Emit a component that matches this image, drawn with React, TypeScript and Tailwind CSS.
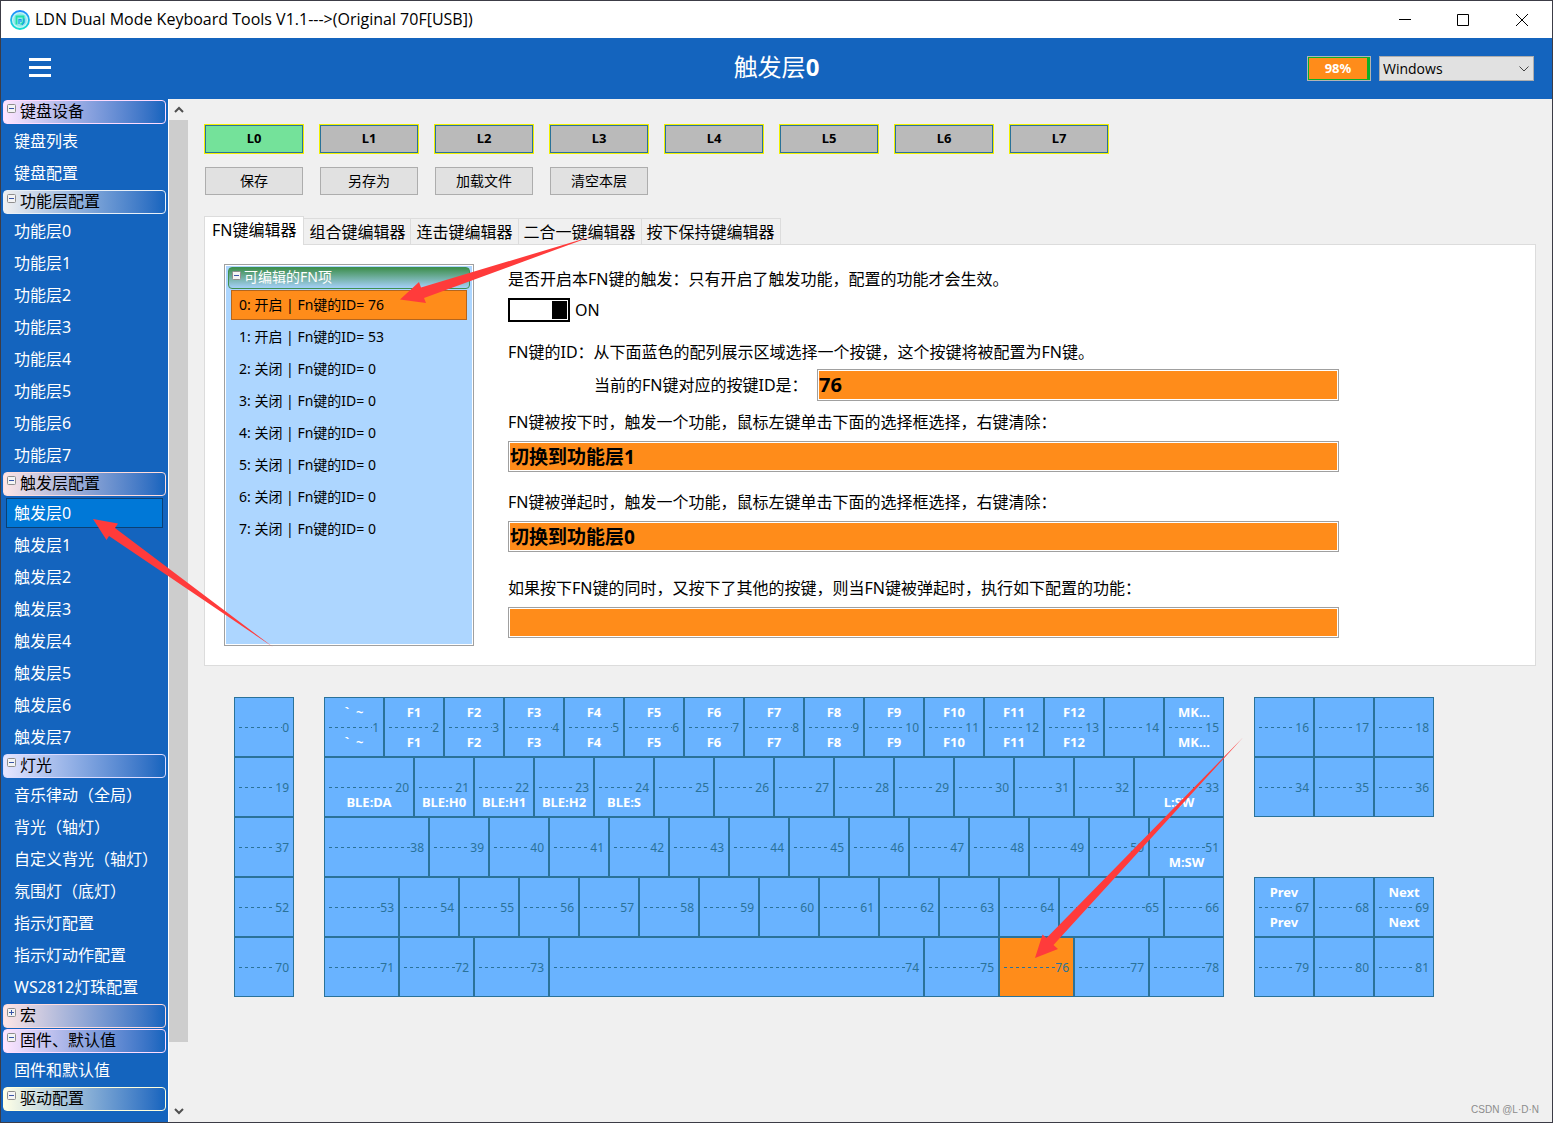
import { useState } from "react";
import clsx from "clsx";

interface NavGroup {
  title: string;
  tint: string;
  items: string[];
}

const layers = [0, 1, 2, 3, 4, 5, 6, 7];

const navGroups: NavGroup[] = [
  { title: "键盘设备", tint: "border-[#ffdcff] from-[#ffe6ff]", items: ["键盘列表", "键盘配置"] },
  { title: "功能层配置", tint: "border-[#e8f0f8] from-[#f0f0f0]", items: layers.map((n) => `功能层${n}`) },
  { title: "触发层配置", tint: "border-[#ffdcdc] from-[#ffe6e6]", items: layers.map((n) => `触发层${n}`) },
  {
    title: "灯光",
    tint: "border-[#dcdcff] from-[#e6e6ff]",
    items: [
      "音乐律动（全局）",
      "背光（轴灯）",
      "自定义背光（轴灯）",
      "氛围灯（底灯）",
      "指示灯配置",
      "指示灯动作配置",
      "WS2812灯珠配置",
    ],
  },
  { title: "宏", tint: "border-[#ffdcdc] from-[#ffe6e6]", items: [] },
  { title: "固件、默认值", tint: "border-[#ffdcff] from-[#ffe6ff]", items: ["固件和默认值"] },
  { title: "驱动配置", tint: "border-[#ffffdc] from-[#ffffe6]", items: [] },
];

const tabs = ["FN键编辑器", "组合键编辑器", "连击键编辑器", "二合一键编辑器", "按下保持键编辑器"];

const fnItems = [
  "0: 开启 | Fn键的ID= 76",
  "1: 开启 | Fn键的ID= 53",
  "2: 关闭 | Fn键的ID= 0",
  "3: 关闭 | Fn键的ID= 0",
  "4: 关闭 | Fn键的ID= 0",
  "5: 关闭 | Fn键的ID= 0",
  "6: 关闭 | Fn键的ID= 0",
  "7: 关闭 | Fn键的ID= 0",
];

// [top label, bottom label]
const keyLabels: Record<number, [string, string]> = {
  1: ["`  ~", "`  ~"],
  15: ["MK...", "MK..."],
  20: ["", "BLE:DA"],
  21: ["", "BLE:H0"],
  22: ["", "BLE:H1"],
  23: ["", "BLE:H2"],
  24: ["", "BLE:S"],
  33: ["", "L:SW"],
  51: ["", "M:SW"],
  67: ["Prev", "Prev"],
  69: ["Next", "Next"],
};
for (let i = 1; i <= 12; i++) keyLabels[i + 1] = [`F${i}`, `F${i}`];

// keys that are not one unit wide
const keyWidths: Record<number, string> = {
  20: "w-[90px]",
  33: "w-[90px]",
  38: "w-[105px]",
  51: "w-[75px]",
  53: "w-[75px]",
  65: "w-[105px]",
  71: "w-[75px]",
  72: "w-[75px]",
  73: "w-[75px]",
  74: "w-[375px]",
  75: "w-[75px]",
  76: "w-[75px]",
  77: "w-[75px]",
  78: "w-[75px]",
};

const range = (from: number, to: number) =>
  Array.from({ length: to - from + 1 }, (_, i) => from + i);

const leftRows = [[0], [19], [37], [52], [70]];
const mainRows = [range(1, 15), range(20, 33), range(38, 51), range(53, 66), range(71, 78)];
const rightRows = [range(16, 18), range(34, 36), [], range(67, 69), range(79, 81)];

function TreeBox({ open }: { open: boolean }) {
  return (
    <svg width="9" height="9" viewBox="0 0 9 9" className="mt-[3px] shrink-0">
      <rect x="0.5" y="0.5" width="8" height="8" rx="1" fill="#f4f4f4" stroke="#8e8e8e" />
      <path d={open ? "M2 4.5h5" : "M2 4.5h5M4.5 2v5"} stroke="#3a56a8" />
    </svg>
  );
}

function Logo() {
  return (
    <svg width="20" height="20" viewBox="0 0 20 20">
      <defs>
        <linearGradient id="ring" x1="0" y1="0" x2="0" y2="1">
          <stop offset="0" stopColor="#1e8cff" />
          <stop offset="1" stopColor="#12e0d0" />
        </linearGradient>
      </defs>
      <circle cx="10" cy="10" r="9" fill="#c4f4f4" stroke="url(#ring)" strokeWidth="1.800" />
      <circle cx="10" cy="10" r="6.800" fill="#8ee8ea" />
      <path d="M6.500 14.500V6.500h7v4.500a3 3 0 0 1-3 3" fill="none" stroke="#1fe0a8" strokeWidth="1.800" />
      <path d="M9 14V9.500h2V12M14 8.500v4l-2 2.500" fill="none" stroke="#1597e8" strokeWidth="1.200" />
    </svg>
  );
}

function Sidebar() {
  const [active, setActive] = useState("触发层0");

  return (
    <nav className="flex w-[167px] shrink-0 flex-col gap-px overflow-hidden bg-[#1464be] pt-px">
      {navGroups.map((group) => (
        <div key={group.title} className="flex shrink-0 flex-col gap-px">
          <button
            className={clsx(
              "mx-[2px] flex h-6 items-start gap-1 rounded border bg-linear-to-r to-[#1464be] pl-[3px] text-left leading-5 text-black",
              group.tint
            )}
          >
            <TreeBox open={group.title !== "宏"} />
            {group.title}
          </button>
          {group.items.length > 0 && (
            <ul>
              {group.items.map((item) => (
                <li key={item} className="px-[5px] py-px">
                  <a
                    href="#"
                    onClick={() => setActive(item)}
                    className={clsx(
                      "block h-[30px] border pl-[7px] leading-7 whitespace-nowrap text-white",
                      item === active ? "border-[#0a4074] bg-[#0078d7]" : "border-transparent"
                    )}
                  >
                    {item}
                  </a>
                </li>
              ))}
            </ul>
          )}
        </div>
      ))}
    </nav>
  );
}

function Scrollbar() {
  return (
    <div className="flex w-5 shrink-0 flex-col border-l border-white bg-[#f0f0f0]">
      <div className="flex h-[21px] items-center justify-center">
        <svg width="10" height="7" viewBox="0 0 10 7">
          <path d="M1 6l4-4 4 4" fill="none" stroke="#505050" strokeWidth="2" />
        </svg>
      </div>
      <div className="flex flex-1 flex-col">
        <div className="flex-[922] bg-[#cdcdcd]" />
        <div className="flex-[59]" />
      </div>
      <div className="flex h-[21px] items-center justify-center">
        <svg width="10" height="7" viewBox="0 0 10 7">
          <path d="M1 1l4 4 4-4" fill="none" stroke="#505050" strokeWidth="2" />
        </svg>
      </div>
    </div>
  );
}

function KeyCap({ id, selected, onSelect }: { id: number; selected: boolean; onSelect: () => void }) {
  const [top, bottom] = keyLabels[id] ?? ["", ""];

  return (
    <button
      onClick={onSelect}
      className={clsx(
        "flex h-15 shrink-0 flex-col border border-[#2a7299] px-1 pt-[7px] text-center text-[13px] leading-[15px] font-bold whitespace-pre text-white",
        keyWidths[id] ?? "w-15",
        selected ? "bg-[#ff8c1a]" : "bg-[#69b3ff]"
      )}
    >
      <span className="block h-[15px] w-full">{top}</span>
      <span className="flex h-[15px] w-full items-center text-xs leading-[15px] font-normal text-[#2a7299]">
        <span className="h-px flex-1 bg-[repeating-linear-gradient(90deg,#2a7299_0_3px,transparent_3px_6px)]" />
        {id}
      </span>
      <span className="block h-[15px] w-full">{bottom}</span>
    </button>
  );
}

function KeyBlock({ rows, selected, onSelect }: { rows: number[][]; selected: number; onSelect: (id: number) => void }) {
  return (
    <div className="shrink-0">
      {rows.map((row, i) => (
        <div key={i} className="flex h-15">
          {row.map((id) => (
            <KeyCap key={id} id={id} selected={id === selected} onSelect={() => onSelect(id)} />
          ))}
        </div>
      ))}
    </div>
  );
}

const fieldClass =
  "w-full border border-[#a0a0a0] bg-[#ff8c1a] px-px pb-[2px] font-bold text-black shadow-[inset_0_0_0_1px_#fff] outline-none";

function FnEditor({ keyId }: { keyId: number }) {
  const [current, setCurrent] = useState(0);
  const [on, setOn] = useState(true);

  return (
    <section className="flex gap-[34px] border border-[#dcdcdc] bg-white p-[19px]">
      <div className="w-[250px] shrink-0 border border-[#a0a0a0] bg-[#add6ff] px-[3px] pt-[2px] text-sm shadow-[inset_0_0_0_1px_#fff]">
        <button className="flex h-[22px] w-full items-start gap-[3px] rounded border border-[#3f8f4f] bg-linear-to-b from-[#3f8f4f] to-[#a5d0f8] pl-[3px] text-left leading-[18px] text-white">
          <TreeBox open />
          可编辑的FN项
        </button>
        <ul className="px-[3px]">
          {fnItems.map((item, i) => (
            <li key={item} className="py-px">
              <button
                onClick={() => setCurrent(i)}
                className={clsx(
                  "h-[30px] w-full border pl-[7px] text-left text-black",
                  i === current ? "border-[#b5651d] bg-[#ff8c1a]" : "border-transparent"
                )}
              >
                {item}
              </button>
            </li>
          ))}
        </ul>
      </div>

      <div className="max-w-[831px] flex-1 pt-[3px] leading-6">
        <p>是否开启本FN键的触发：只有开启了触发功能，配置的功能才会生效。</p>
        <label className="relative mt-[7px] flex h-6 w-fit items-center gap-[5px]">
          <input
            type="checkbox"
            checked={on}
            onChange={() => setOn(!on)}
            className="peer sr-only"
          />
          <span className="flex h-6 w-[62px] justify-start border-2 border-black bg-white p-px peer-checked:justify-end">
            <span className="w-[15px] bg-black" />
          </span>
          {on ? "ON" : "OFF"}
        </label>
        <p className="mt-[18px]">FN键的ID：从下面蓝色的配列展示区域选择一个按键，这个按键将被配置为FN键。</p>
        <div className="mt-[5px] flex items-center">
          <label htmlFor="key-id" className="w-[309px] shrink-0 pl-[86px] whitespace-nowrap">
            当前的FN键对应的按键ID是：
          </label>
          <input id="key-id" readOnly value={keyId} className={clsx(fieldClass, "h-8 text-xl")} />
        </div>
        <label htmlFor="on-press" className="mt-[9px] block">
          FN键被按下时，触发一个功能，鼠标左键单击下面的选择框选择，右键清除：
        </label>
        <input
          id="on-press"
          readOnly
          value="切换到功能层1"
          className={clsx(fieldClass, "mt-[7px] block h-[31px] text-[19px]")}
        />
        <label htmlFor="on-release" className="mt-[18px] block">
          FN键被弹起时，触发一个功能，鼠标左键单击下面的选择框选择，右键清除：
        </label>
        <input
          id="on-release"
          readOnly
          value="切换到功能层0"
          className={clsx(fieldClass, "mt-[7px] block h-[31px] text-[19px]")}
        />
        <label htmlFor="on-combo" className="mt-6 block">
          如果按下FN键的同时，又按下了其他的按键，则当FN键被弹起时，执行如下配置的功能：
        </label>
        <input
          id="on-combo"
          readOnly
          value=""
          className={clsx(fieldClass, "mt-[7px] mb-2 block h-[31px] text-[19px]")}
        />
      </div>
    </section>
  );
}

// red pointers drawn over the window
function Arrows() {
  return (
    <svg width="1553" height="1123" className="pointer-events-none absolute -top-px -left-px" fill="#ff3b3b">
      <polygon points="400,299.500 419,282 421,287.500 593,236 424,298 426,303" />
      <polygon points="93,519 118,523.500 115,528 273,647 109,536 106.500,540" />
      <polygon points="1035,958 1042.500,934.500 1046.500,938 1243,737.500 1053.500,945 1058,949" />
    </svg>
  );
}

export default function App() {
  const [layer, setLayer] = useState(0);
  const [tab, setTab] = useState(0);
  const [keyId, setKeyId] = useState(76);

  return (
    <div className="relative flex h-screen flex-col overflow-hidden border border-[#3c3c46] bg-[#f0f0f0] font-['Noto_Sans','Noto_Sans_CJK_SC',sans-serif] text-base text-black">
      <div className="flex h-[37px] shrink-0 items-center bg-white pl-[9px]">
        <Logo />
        <span className="ml-[5px] flex-1 pb-px font-['Open_Sans','Noto_Sans_CJK_SC',sans-serif]">
          LDN Dual Mode Keyboard Tools V1.1---&gt;(Original 70F[USB])
        </span>
        <button aria-label="Minimize" className="flex w-[58px] justify-center">
          <svg width="12" height="12" stroke="#000" fill="none">
            <path d="M0 5.500h12" />
          </svg>
        </button>
        <button aria-label="Maximize" className="flex w-[58px] justify-center">
          <svg width="12" height="12" stroke="#000" fill="none">
            <path d="M.5.5h11v11H.5z" />
          </svg>
        </button>
        <button aria-label="Close" className="flex w-[60px] justify-center">
          <svg width="12" height="12" stroke="#000" fill="none">
            <path d="M0 0l12 12M12 0L0 12" />
          </svg>
        </button>
      </div>

      <header className="grid h-[61px] shrink-0 grid-cols-[1fr_auto_1fr] items-center bg-[#1464be] px-[18px]">
        <button aria-label="Menu" className="ml-[10px] flex w-[22px] flex-col gap-[5px] pb-[2px]">
          <span className="h-[3px] bg-white" />
          <span className="h-[3px] bg-white" />
          <span className="h-[3px] bg-white" />
        </button>
        <h1 className="pb-1 text-2xl text-white">
          触发层<b>0</b>
        </h1>
        <div className="flex justify-end gap-2">
          <div
            role="progressbar"
            aria-label="Battery"
            aria-valuenow={98}
            className="h-[25px] w-16 border border-[#b4b4b4] bg-[#0aaf28] py-px pr-[3px] pl-px"
          >
            <div className="h-full bg-[#ff8c1a] text-center text-[13px] leading-[21px] font-bold text-white">98%</div>
          </div>
          <div className="relative">
            <select
              aria-label="System"
              className="h-[25px] w-[155px] appearance-none border border-[#adadad] bg-[#e1e1e1] pl-[3px] font-['Open_Sans',sans-serif] text-sm leading-[22px] text-black"
            >
              <option>Windows</option>
              <option>Mac</option>
            </select>
            <svg width="10" height="6" className="pointer-events-none absolute top-[10px] right-[5px]">
              <path d="M.5.5L5 5 9.500.5" fill="none" stroke="#444" />
            </svg>
          </div>
        </div>
      </header>

      <div className="flex min-h-0 flex-1">
        <Sidebar />
        <Scrollbar />

        <main className="flex min-w-0 flex-1 flex-col px-4 pt-[25px]">
          <div className="flex gap-[15px]">
            {layers.map((n) => (
              <button
                key={n}
                onClick={() => setLayer(n)}
                className={clsx(
                  "h-[30px] w-[100px] border border-[#f0f000] text-[13px] font-bold shadow-[inset_0_0_0_1px_#2a7299]",
                  n === layer ? "bg-[#74e29a]" : "bg-[#bababa]"
                )}
              >
                L{n}
              </button>
            ))}
          </div>
          <div className="mt-[13px] flex gap-[17px] pl-px">
            {["保存", "另存为", "加载文件", "清空本层"].map((label) => (
              <button key={label} className="h-7 w-[98px] border border-[#adadad] bg-[#e1e1e1] text-sm">
                {label}
              </button>
            ))}
          </div>

          <div role="tablist" className="mt-[21px] flex items-end">
            {tabs.map((label, i) => (
              <button
                key={label}
                role="tab"
                aria-selected={i === tab}
                onClick={() => setTab(i)}
                className={clsx(
                  "border-t border-r border-[#dcdcdc] whitespace-nowrap",
                  i === tab
                    ? "relative -mb-px h-[29px] border-l bg-white px-[7px] pb-px leading-[25px]"
                    : "h-[26px] px-[5px] leading-[27px]"
                )}
              >
                {label}
              </button>
            ))}
          </div>
          <FnEditor keyId={keyId} />

          <div className="mt-[31px] flex gap-[30px] pl-[30px]">
            <KeyBlock rows={leftRows} selected={keyId} onSelect={setKeyId} />
            <KeyBlock rows={mainRows} selected={keyId} onSelect={setKeyId} />
            <KeyBlock rows={rightRows} selected={keyId} onSelect={setKeyId} />
          </div>
        </main>
      </div>

      <span className="absolute right-[13px] bottom-[5px] font-['Liberation_Sans',sans-serif] text-[10px] text-[#8c8c8c]">
        CSDN @L·D·N
      </span>
      <Arrows />
    </div>
  );
}
